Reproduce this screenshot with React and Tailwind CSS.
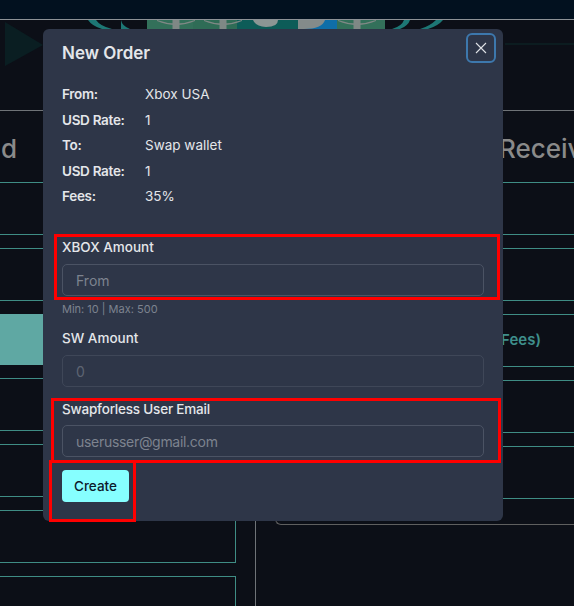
const info = [
  ["From:", "Xbox USA"],
  ["USD Rate:", "1"],
  ["To:", "Swap wallet"],
  ["USD Rate:", "1"],
  ["Fees:", "35%"],
];

const inputClass =
  "block w-full h-8 px-[13px] bg-transparent border border-[#4b5364] rounded-[5px] text-[14px] text-[#e4e6ea] placeholder:text-[#7d838f] outline-none";

const TetherMark = ({ x }) => (
  <g fill="#7f8885">
    <path d={`M${x - 19} 0 Q${x} 7 ${x + 19} 0 L${x + 19} 1 Q${x} 9 ${x - 19} 1 Z`} />
    <rect x={x - 3.5} y="0" width="7" height="9" />
  </g>
);

const Hero = () => (
  <svg width="574" height="90" viewBox="0 0 574 90" className="block">
    <path d="M5 2 L43 25 L5 46 Z" fill="#0a1e22" />
    <path d="M505 24 H574" stroke="#0c1c20" strokeWidth="2" />
    <path d="M88 0 Q92 6 102 9 H112 Q100 6 96 0 Z" fill="#1d7775" />
    <path d="M121 0 Q122 6 130 9 H121 Z" fill="#1d7775" />
    <path d="M410 0 Q408 6 400 9 H392 Q402 6 404 0 Z" fill="#1d7775" />
    <path d="M443 0 Q438 6 428 9 H420 Q430 6 436 0 Z" fill="#1d7775" />
    <rect x="147" y="0" width="46" height="9" fill="#33705a" />
    <rect x="193" y="0" width="44" height="9" fill="#2f6c56" />
    <rect x="237" y="0" width="61" height="9" fill="#0d5c58" />
    <rect x="298" y="0" width="39" height="9" fill="#0f6ea8" />
    <rect x="337" y="0" width="48" height="9" fill="#33705a" />
    <TetherMark x={176} />
    <TetherMark x={223} />
    <TetherMark x={357} />
    <path d="M253 0 H278 Q278 7 266 7 Q256 7 253 0 Z" fill="#8b9694" />
    <path d="M298 0 H325 Q322 9 304 9 H298 Z" fill="#848b8a" />
  </svg>
);

const LeftRow = ({ children }) => (
  <div className="h-[53px] w-[236px] mb-[13px] border-y border-r border-[#3f8d85]">{children}</div>
);

const RightRow = ({ children }) => (
  <div className="h-[53px] mb-[13px] border-y border-[#3f8d85] flex items-center justify-end pr-[33px]">
    {children}
  </div>
);

export default function App() {
  return (
    <div
      className="relative w-[574px] h-[606px] overflow-hidden bg-[#0c0f17]"
      style={{ fontFamily: "Inter, 'Noto Sans', sans-serif" }}
    >
      <div className="h-5 bg-[#02111f] border-b border-[#8d9296]" />
      <div className="h-[91px] border-b border-[#6f7377]">
        <Hero />
      </div>

      <div className="flex h-[495px]">
        <div className="w-[255px] shrink-0">
          <div className="h-[71px] w-[17px] flex items-center justify-end pt-[3px] text-[26px] font-medium text-[#8a8a8a] whitespace-nowrap">
            Send
          </div>
          <LeftRow />
          <LeftRow />
          <div className="h-[51px] w-[236px] mb-[13px] bg-[#5fa8a3]" />
          <LeftRow />
          <LeftRow />
          <LeftRow />
          <div className="h-[60px] w-[236px] border-t border-r border-[#3f8d85]" />
        </div>

        <div className="flex-1 min-w-0 border-l border-[#6f7377]">
          <div className="h-[71px] flex items-center pl-[243px] pt-[3px] text-[26px] font-medium text-[#8a8a8a] whitespace-nowrap overflow-hidden">
            Receive
          </div>
          <RightRow />
          <RightRow />
          <RightRow>
            <span className="text-[15px] font-semibold text-[#3f8f8c] whitespace-nowrap">(35% Fees)</span>
          </RightRow>
          <RightRow />
          <RightRow />
          <div className="h-[14px] ml-[19px] -mt-[1px] border-l border-b border-[#5f5f5f] rounded-bl-[6px]" />
        </div>
      </div>

      {/* modal */}
      <div className="absolute left-[43px] top-[29px] w-[460px] h-[492px] bg-[#2e3648] rounded-[6px] text-[#e4e6ea]">
        <div className="flex justify-between items-start h-[36px] pl-[19px] pr-[7px] pt-1">
          <h2 className="mt-2 text-[17px] leading-6 font-semibold">New Order</h2>
          <button className="w-[30px] h-[30px] flex items-center justify-center border-2 border-[#3d78ad] rounded-[6px]">
            <svg width="12" height="12" viewBox="0 0 12 12" fill="none" stroke="#dfe2e6" strokeWidth="1.1">
              <path d="M1 1 L11 11 M11 1 L1 11" />
            </svg>
          </button>
        </div>

        <div className="mt-[17px] h-[128px] px-[19px] text-[13.5px] leading-[25.5px]">
          {info.map(([label, value], i) => (
            <div key={i} className="flex">
              <span className="w-[83px] font-semibold tracking-[-0.3px]">{label}</span>
              <span>{value}</span>
            </div>
          ))}
        </div>

        <div className="px-[19px]">
          <div className="relative mt-[27px]">
            <label className="block text-[13.5px] leading-5 font-medium mb-[7px]">XBOX Amount</label>
            <input className={inputClass} placeholder="From" />
            <span className="absolute -top-[3px] -bottom-[4px] -left-[8px] -right-[16px] border-[3px] border-[#ff0000] pointer-events-none" />
          </div>
          <p className="mt-[5px] text-[11px] leading-4 text-[#7d838f]">Min: 10 | Max: 500</p>

          <label className="block mt-[11px] text-[13.5px] leading-5 font-medium mb-[7px]">SW Amount</label>
          <input className={inputClass + " opacity-60"} placeholder="0" disabled />

          <div className="relative mt-3">
            <label className="block text-[13.5px] leading-5 font-medium tracking-[-0.2px] mb-[6px]">
              Swapforless User Email
            </label>
            <input className={inputClass + " tracking-[-0.3px]"} placeholder="userusser@gmail.com" />
            <span className="absolute -top-[1px] -bottom-[6px] -left-[11px] -right-[17px] border-[3px] border-[#ff0000] pointer-events-none" />
          </div>

          <div className="relative mt-[13px] w-[67px]">
            <button className="w-full h-8 bg-[#86ffff] rounded-[4px] text-[13.5px] font-medium text-[#0e1a2b]">
              Create
            </button>
            <span className="absolute -top-[10px] -bottom-[20px] -left-[13px] -right-[7px] border-[3px] border-[#ff0000] pointer-events-none" />
          </div>
        </div>
      </div>
    </div>
  );
}
